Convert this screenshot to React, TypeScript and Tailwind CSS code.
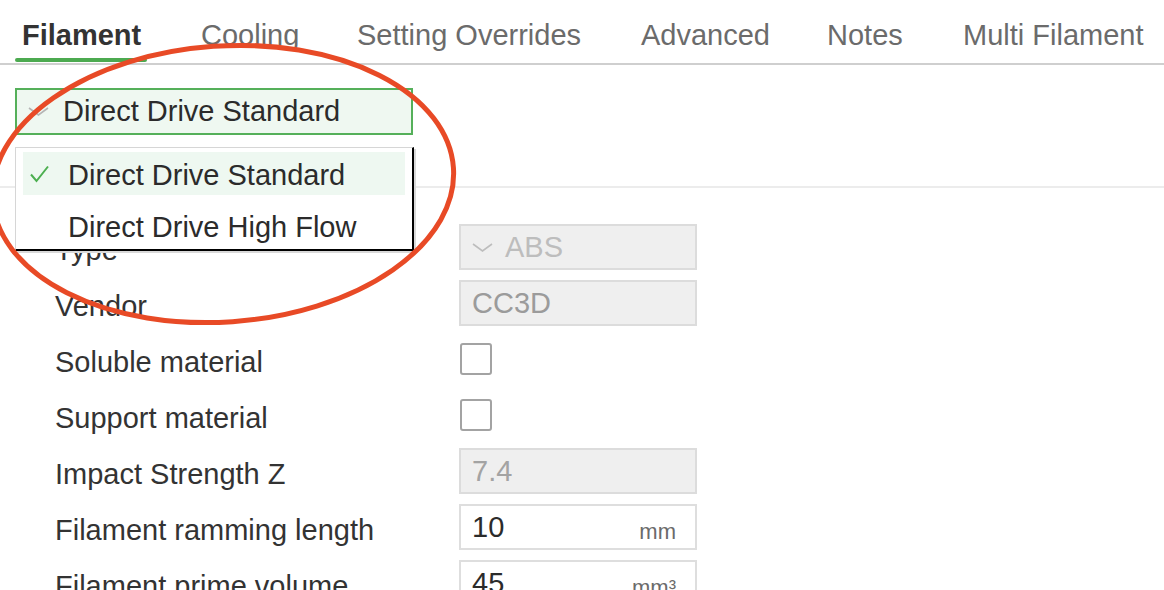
const tabs = [
  { label: 'Filament', width: 'w-[179px]' },
  { label: 'Cooling', width: 'w-[156px]' },
  { label: 'Setting Overrides', width: 'w-[284px]' },
  { label: 'Advanced', width: 'w-[186px]' },
  { label: 'Notes', width: 'w-[136px]' },
  { label: 'Multi Filament', width: 'w-[200px]' },
]

function Chevron({ color }: { color: string }) {
  return (
    <svg width="21" height="9" viewBox="0 0 21 9" className="shrink-0">
      <polyline points="1,1 10.5,8 20,1" fill="none" stroke={color} strokeWidth="1.6" />
    </svg>
  )
}

function Field({ children, disabled }: { children: React.ReactNode; disabled?: boolean }) {
  return (
    <div
      className={`flex h-[46px] w-[238px] items-center border-2 px-[11px] ${
        disabled ? 'border-[#dcdcdc] bg-[#efefef]' : 'border-[#dedede] bg-white'
      }`}
    >
      {children}
    </div>
  )
}

function Box() {
  return <div className="ml-[1px] h-[32px] w-[32px] rounded-[3px] border-2 border-[#a3a3a3] bg-white" />
}

function Row({ label, children }: { label: string; children: React.ReactNode }) {
  return (
    <div className="flex h-[56px] items-center">
      <div className="w-[404px] pt-[6px] text-[#333333]">{label}</div>
      {children}
    </div>
  )
}

export default function App() {
  return (
    <div
      className="relative h-[590px] w-[1164px] overflow-hidden bg-white text-[29px] leading-none"
      style={{ fontFamily: '"Liberation Sans", Arial, sans-serif' }}
    >
      {/* Tabs */}
      <div className="flex h-[65px] border-b-2 border-[#cfcfcf] pl-[15px]">
        {tabs.map((t, i) => (
          <div key={t.label} className={`relative flex h-full items-start pt-[21px] ${t.width}`}>
            <span
              className={
                i === 0 ? 'pl-[7px] font-bold text-[#333333]' : 'pl-[7px] text-[#6b6b6b]'
              }
            >
              {t.label}
            </span>
            {i === 0 && (
              <div className="absolute bottom-[1px] left-0 h-[4px] w-[132px] rounded-full bg-[#4caa50]" />
            )}
          </div>
        ))}
      </div>

      {/* Preset selector */}
      <div className="px-[15px] pt-[23px]">
        <div className="flex h-[47px] w-[398px] items-center border-2 border-[#55b05a] bg-[#eff8f1] pl-[11px]">
          <Chevron color="#b5b5b5" />
          <span className="ml-[14px] text-[#2b2b2b]">Direct Drive Standard</span>
        </div>
      </div>

      <div className="mt-[51px] border-t-2 border-[#ececec]" />

      {/* Settings rows */}
      <div className="pl-[55px] pt-[31px]">
        <Row label="Type">
          <Field disabled>
            <Chevron color="#bdbdbd" />
            <span className="ml-[12px] text-[#bdbdbd]">ABS</span>
          </Field>
        </Row>
        <Row label="Vendor">
          <Field disabled>
            <span className="text-[#9b9b9b]">CC3D</span>
          </Field>
        </Row>
        <Row label="Soluble material">
          <Box />
        </Row>
        <Row label="Support material">
          <Box />
        </Row>
        <Row label="Impact Strength Z">
          <Field disabled>
            <span className="text-[#a3a3a3]">7.4</span>
          </Field>
        </Row>
        <Row label="Filament ramming length">
          <Field>
            <span className="text-[#2b2b2b]">10</span>
            <span className="ml-auto mt-[10px] pr-[8px] text-[22px] text-[#6b6b6b]">mm</span>
          </Field>
        </Row>
        <Row label="Filament prime volume">
          <Field>
            <span className="text-[#2b2b2b]">45</span>
            <span className="ml-auto mt-[10px] pr-[8px] text-[22px] text-[#6b6b6b]">mm³</span>
          </Field>
        </Row>
      </div>

      {/* Open dropdown menu */}
      <div className="absolute left-[15px] top-[147px] h-[104px] w-[399px] border-l border-t border-[#d6d6d6] border-b-2 border-r-2 border-b-black border-r-black bg-white pt-[4px] shadow-[2px_2px_0_#d9d9d9]">
        <div className="mx-[7px] flex h-[43px] items-center bg-[#eef8f1] pl-[7px] pt-[3px]">
          <svg width="19" height="18" viewBox="0 0 19 18" className="shrink-0 -translate-y-[1px]">
            <polyline points="1,9.5 6.5,16 18,1.5" fill="none" stroke="#4caf50" strokeWidth="2" />
          </svg>
          <span className="ml-[19px] text-[#2b2b2b]">Direct Drive Standard</span>
        </div>
        <div className="mx-[7px] flex h-[52px] items-center pl-[45px] pt-[12px]">
          <span className="text-[#2b2b2b]">Direct Drive High Flow</span>
        </div>
      </div>

      {/* Annotation */}
      <svg className="pointer-events-none absolute left-0 top-0" width="1164" height="590">
        <ellipse
          cx="223"
          cy="184"
          rx="231"
          ry="138"
          transform="rotate(-4 223 184)"
          fill="none"
          stroke="#e84a26"
          strokeWidth="5"
        />
      </svg>
    </div>
  )
}
